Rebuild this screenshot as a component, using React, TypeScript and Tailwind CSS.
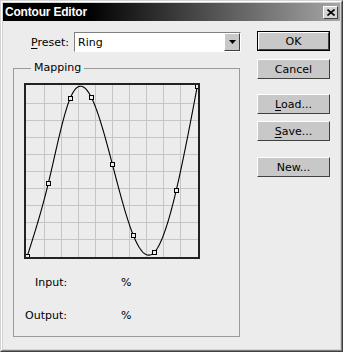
import React from "react";

const PTS: [number, number][] = [
  [3.3, 173],
  [24.3, 100.3],
  [46.3, 15],
  [67.3, 14.3],
  [88.3, 81],
  [109.3, 152.3],
  [130.3, 169.3],
  [152.3, 107],
  [173.3, 3.3],
];

function naturalSpline(pts: [number, number][]) {
  const n = pts.length;
  const xs = pts.map((p) => p[0]);
  const ys = pts.map((p) => p[1]);
  const h: number[] = [];
  for (let i = 0; i < n - 1; i++) h.push(xs[i + 1] - xs[i]);
  const a: number[] = new Array(n).fill(0);
  const b: number[] = new Array(n).fill(1);
  const c: number[] = new Array(n).fill(0);
  const d: number[] = new Array(n).fill(0);
  for (let i = 1; i < n - 1; i++) {
    a[i] = h[i - 1];
    b[i] = 2 * (h[i - 1] + h[i]);
    c[i] = h[i];
    d[i] = 6 * ((ys[i + 1] - ys[i]) / h[i] - (ys[i] - ys[i - 1]) / h[i - 1]);
  }
  const cp = new Array(n).fill(0);
  const dp = new Array(n).fill(0);
  cp[0] = c[0] / b[0];
  dp[0] = d[0] / b[0];
  for (let i = 1; i < n; i++) {
    const m = b[i] - a[i] * cp[i - 1];
    cp[i] = c[i] / m;
    dp[i] = (d[i] - a[i] * dp[i - 1]) / m;
  }
  const M = new Array(n).fill(0);
  M[n - 1] = dp[n - 1];
  for (let i = n - 2; i >= 0; i--) M[i] = dp[i] - cp[i] * M[i + 1];
  return (x: number) => {
    let i = 0;
    while (i < n - 2 && x > xs[i + 1]) i++;
    const hi = h[i];
    const t1 = xs[i + 1] - x;
    const t2 = x - xs[i];
    return (
      (M[i] * t1 * t1 * t1) / (6 * hi) +
      (M[i + 1] * t2 * t2 * t2) / (6 * hi) +
      (ys[i] / hi - (M[i] * hi) / 6) * t1 +
      (ys[i + 1] / hi - (M[i + 1] * hi) / 6) * t2
    );
  };
}

function Graph() {
  const f = naturalSpline(PTS);
  const samples: string[] = [];
  for (let x = PTS[0][0]; x <= PTS[PTS.length - 1][0] + 0.01; x += 0.5) {
    let y = f(x);
    y = Math.max(3, Math.min(173, y));
    samples.push(`${x.toFixed(2)},${y.toFixed(2)}`);
  }
  const grid: number[] = [];
  for (let i = 1; i < 10; i++) grid.push(3 + 17 * i + 0.5);
  return (
    <svg width="176" height="176" viewBox="0 0 176 176" className="block">
      <rect x="0" y="0" width="176" height="176" fill="#ececec" />
      {grid.map((g) => (
        <line key={"v" + g} x1={g} y1="2" x2={g} y2="174" stroke="#c6c6c6" strokeWidth="1" />
      ))}
      {grid.map((g) => (
        <line key={"h" + g} x1="2" y1={g} x2="174" y2={g} stroke="#c6c6c6" strokeWidth="1" />
      ))}
      <polyline points={samples.join(" ")} fill="none" stroke="#000" strokeWidth="1.1" />
      {PTS.map(([x, y], i) => (
        <rect
          key={i}
          x={Math.round(x) - 2 + 0.5}
          y={Math.round(y) - 2 + 0.5}
          width="4"
          height="4"
          fill="#ececec"
          stroke="#000"
          strokeWidth="1"
        />
      ))}
      <rect x="1" y="1" width="174" height="174" fill="none" stroke="#222" strokeWidth="2" />
    </svg>
  );
}

function Btn({
  children,
  def,
}: {
  children: React.ReactNode;
  def?: boolean;
}) {
  const inner = (
    <div className="h-full w-full border border-t-white border-l-white border-r-[#404040] border-b-[#404040] bg-[#c8c8c8] flex items-center justify-center text-black">
      {children}
    </div>
  );
  return def ? (
    <div className="h-[20px] w-[73px] border border-black">{inner}</div>
  ) : (
    <div className="h-[20px] w-[73px]">{inner}</div>
  );
}

export default function App() {
  return (
    <div
      className="w-[343px] h-[352px] border border-t-[#d4d4d4] border-l-[#d4d4d4] border-r-[#404040] border-b-[#404040] overflow-hidden"
      style={{ fontFamily: '"DejaVu Sans", sans-serif' }}
    >
      <div className="h-full w-full border border-t-white border-l-white border-r-[#808080] border-b-[#808080] bg-[#d4d4d4] p-px flex flex-col">
        <div className="h-[18px] bg-[linear-gradient(to_right,#000_0%,#000_25%,#a6a6a6_100%)] flex items-center justify-between pl-[2px] pr-[2px]">
          <span
            className="text-white font-bold text-[12px] tracking-[-0.2px] leading-none"
            style={{ fontFamily: '"Liberation Sans", sans-serif' }}
          >
            Contour Editor
          </span>
          <div className="w-[15px] h-[13px] bg-[#d4d4d4] border border-t-white border-l-white border-r-[#404040] border-b-[#404040] flex items-center justify-center">
            <svg width="8" height="7" viewBox="0 0 8 7">
              <path d="M0.5 0.5 L7.5 6.5 M7.5 0.5 L0.5 6.5" stroke="#000" strokeWidth="1.6" />
            </svg>
          </div>
        </div>
        <div className="flex-1 bg-[#ececec] flex text-[11px] text-black leading-none">
          <div className="pl-[10px] pt-[11px] flex flex-col">
            <div className="flex items-center h-[20px]">
              <span className="pl-[18px] w-[61px]">
                <span className="underline underline-offset-2">P</span>reset:
              </span>
              <div className="w-[167px] h-[20px] border border-t-[#808080] border-l-[#808080] border-r-white border-b-white bg-white flex items-center">
                <div className="flex-1 pl-[3px]">Ring</div>
                <div className="w-[16px] h-full border border-t-white border-l-white border-r-[#404040] border-b-[#404040] bg-[#c8c8c8] flex items-center justify-center">
                  <svg width="7" height="4" viewBox="0 0 7 4">
                    <path d="M0 0 L7 0 L3.5 4 Z" fill="#000" />
                  </svg>
                </div>
              </div>
            </div>
            <div className="relative mt-[16px] w-[227px] h-[269px] border border-[#9a9a9a] pl-[10px] pt-[14px]">
              <span className="absolute -top-[7px] left-[17px] bg-[#ececec] px-[3px]">Mapping</span>
              <Graph />
              <div className="mt-[17px] flex items-center h-[12px]">
                <span className="pl-[11px] w-[97px]">Input:</span>
                <span>%</span>
              </div>
              <div className="mt-[21px] flex items-center h-[12px]">
                <span className="pl-px w-[97px]">Output:</span>
                <span>%</span>
              </div>
            </div>
          </div>
          <div className="ml-[16px] pt-[10px] flex flex-col">
            <Btn def>OK</Btn>
            <div className="mt-[8px]">
              <Btn>Cancel</Btn>
            </div>
            <div className="mt-[15px]">
              <Btn>
                <span>
                  <span className="underline underline-offset-2">L</span>oad...
                </span>
              </Btn>
            </div>
            <div className="mt-[7px]">
              <Btn>
                <span>
                  <span className="underline underline-offset-2">S</span>ave...
                </span>
              </Btn>
            </div>
            <div className="mt-[16px]">
              <Btn>New...</Btn>
            </div>
          </div>
        </div>
      </div>
    </div>
  );
}
